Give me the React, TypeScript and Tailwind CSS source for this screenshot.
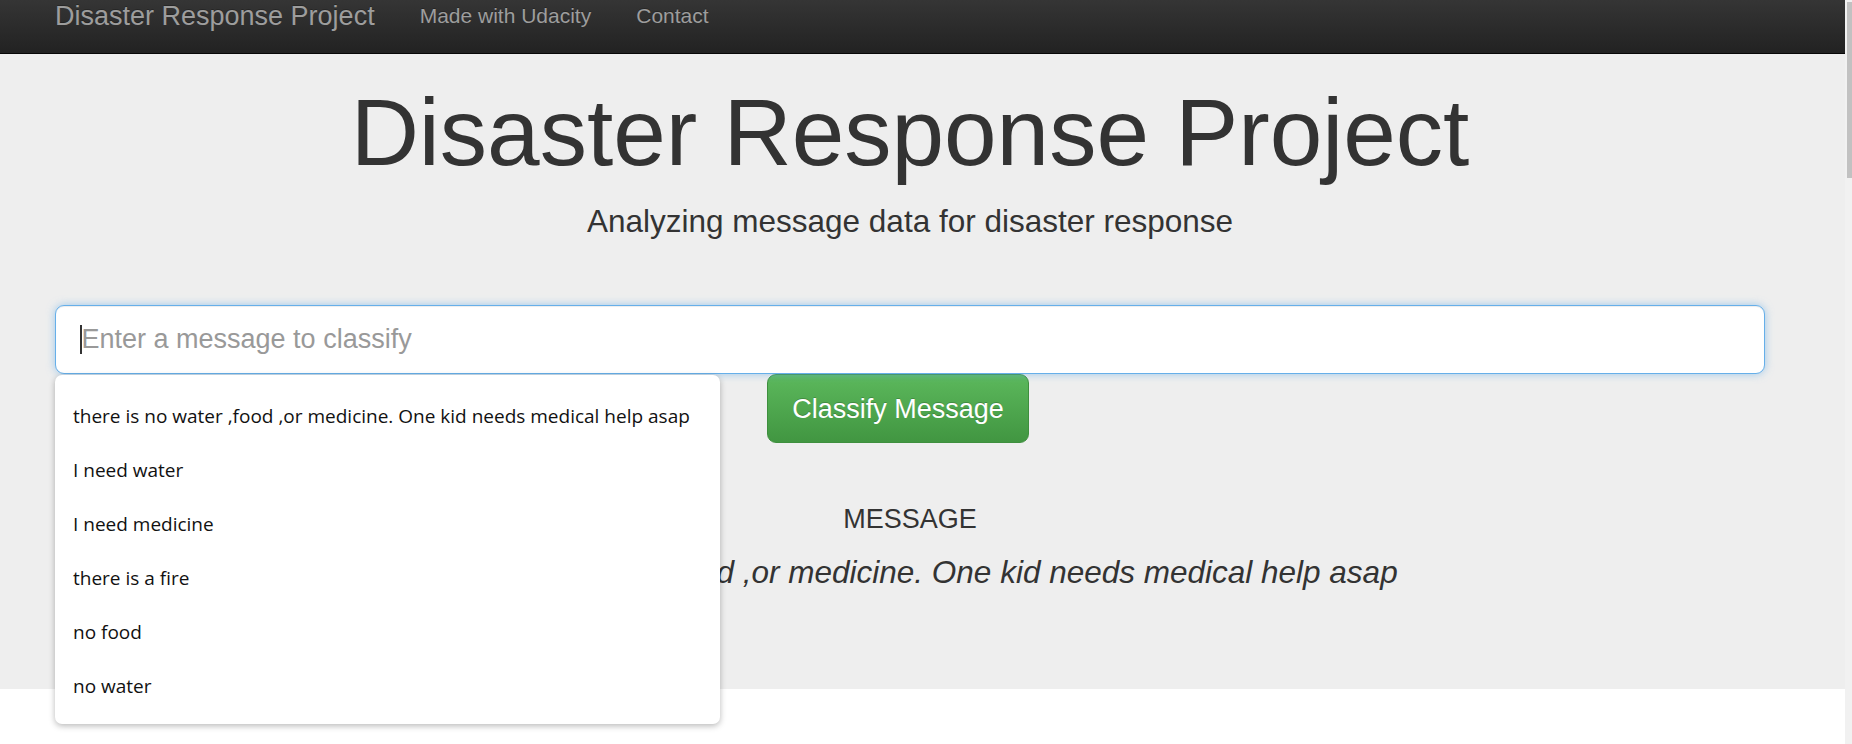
import React from "react";

const suggestions = [
  "there is no water ,food ,or medicine. One kid needs medical help asap",
  "I need water",
  "I need medicine",
  "there is a fire",
  "no food",
  "no water",
];

export default function App() {
  return (
    <div className="flex h-[744px] w-[1852px] overflow-hidden bg-white font-['Liberation_Sans',Arial,sans-serif] text-[#333333]">
      <div className="flex w-[1845px] flex-col">
        <nav className="h-[54px] shrink-0 border-b border-[#080808] bg-[linear-gradient(to_bottom,#353535,#222222)]">
          <div className="flex pl-[55px] pt-[1px] text-[#9d9d9d] [text-shadow:0_-1px_0_rgba(0,0,0,0.25)]">
            <span className="text-[27px] leading-[30px]">Disaster Response Project</span>
            <span className="ml-[45px] text-[21px] leading-[30px]">Made with Udacity</span>
            <span className="ml-[45px] text-[21px] leading-[30px]">Contact</span>
          </div>
        </nav>
        <main className="h-[635px] shrink-0 bg-[#eeeeee]">
          <div className="ml-[55px] w-[1710px] pt-[26px] text-center">
            <h1 className="text-[94.5px] font-normal leading-[104px]">Disaster Response Project</h1>
            <p className="mt-[15px] text-[31.5px] leading-[45px]">Analyzing message data for disaster response</p>
            <div className="relative mt-[61px] text-left">
              <div className="flex h-[69px] items-center rounded-[9px] border-[1.5px] border-[#66afe9] bg-white pl-[24px] shadow-[inset_0_1px_1px_rgba(0,0,0,0.075),0_0_8px_rgba(102,175,233,0.6)]">
                <span className="h-[29px] w-[1.5px] bg-[#333333]" />
                <span className="text-[27px] text-[#999999]">Enter a message to classify</span>
              </div>
              <div className="absolute left-0 top-[70px] z-10 w-[665px] rounded-[7px] bg-white pb-[11px] pt-[14px] font-['Open_Sans','Noto_Sans',sans-serif] text-[19px] text-[#111111] shadow-[0_2px_6px_rgba(0,0,0,0.28)]">
                {suggestions.map((s) => (
                  <div key={s} className="flex h-[54px] items-center pl-[18px]">
                    {s}
                  </div>
                ))}
              </div>
            </div>
            <div className="flex">
              <button className="ml-[712px] h-[69px] w-[262px] rounded-[9px] border-[1.5px] border-[#3e8f3e] bg-[linear-gradient(to_bottom,#5cb85c,#419641)] text-[27px] leading-[36px] text-white [text-shadow:0_-1px_0_rgba(0,0,0,0.2)]">
                Classify Message
              </button>
            </div>
            <div className="mt-[61px] text-[27px] leading-[30px]">MESSAGE</div>
            <p className="mt-[16px] text-[31.5px] italic leading-[45px]">
              there is no water ,food ,or medicine. One kid needs medical help asap
            </p>
          </div>
        </main>
        <div className="flex-1 bg-white" />
      </div>
      <div className="w-[7px] bg-[#f1f1f1] pl-[2px] pt-[2px]">
        <div className="h-[176px] w-[5px] bg-[#c1c1c1]" />
      </div>
    </div>
  );
}
